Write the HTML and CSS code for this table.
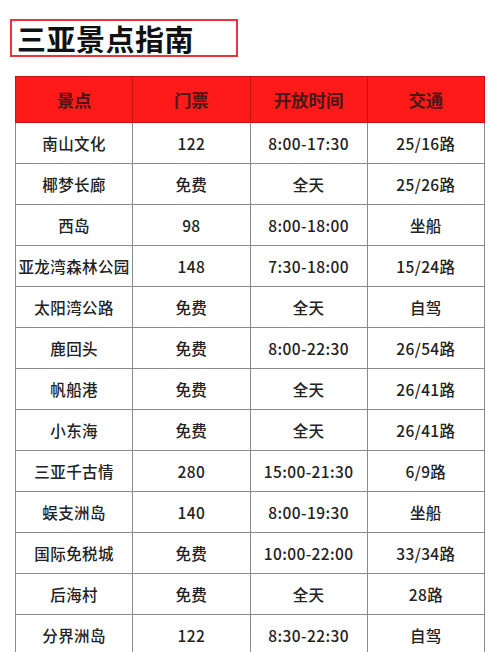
FILE: index.html
```html
<!DOCTYPE html>
<html lang="zh">
<head>
<meta charset="utf-8">
<link rel="stylesheet" href="styles.css">
</head>
<body>
<div class="page">
  <h1 class="title">三亚景点指南</h1>
  <table class="guide">
    <thead>
      <tr><th>景点</th><th>门票</th><th>开放时间</th><th>交通</th></tr>
    </thead>
    <tbody>
      <tr><td>南山文化</td><td>122</td><td>8:00-17:30</td><td>25/16路</td></tr>
      <tr><td>椰梦长廊</td><td>免费</td><td>全天</td><td>25/26路</td></tr>
      <tr><td>西岛</td><td>98</td><td>8:00-18:00</td><td>坐船</td></tr>
      <tr><td>亚龙湾森林公园</td><td>148</td><td>7:30-18:00</td><td>15/24路</td></tr>
      <tr><td>太阳湾公路</td><td>免费</td><td>全天</td><td>自驾</td></tr>
      <tr><td>鹿回头</td><td>免费</td><td>8:00-22:30</td><td>26/54路</td></tr>
      <tr><td>帆船港</td><td>免费</td><td>全天</td><td>26/41路</td></tr>
      <tr><td>小东海</td><td>免费</td><td>全天</td><td>26/41路</td></tr>
      <tr><td>三亚千古情</td><td>280</td><td>15:00-21:30</td><td>6/9路</td></tr>
      <tr><td>蜈支洲岛</td><td>140</td><td>8:00-19:30</td><td>坐船</td></tr>
      <tr><td>国际免税城</td><td>免费</td><td>10:00-22:00</td><td>33/34路</td></tr>
      <tr><td>后海村</td><td>免费</td><td>全天</td><td>28路</td></tr>
      <tr><td>分界洲岛</td><td>122</td><td>8:30-22:30</td><td>自驾</td></tr>
    </tbody>
  </table>
</div>
</body>
</html>
```
FILE: styles.css
```css
html, body {
  margin: 0;
  padding: 0;
  background: #ffffff;
}
body {
  font-family: "Noto Sans CJK SC", sans-serif;
  color: #222222;
}
.page {
  padding: 19px 0 0 15px;
  width: 470px;
}
.title {
  margin: 0 0 19px -5px;
  width: 219px;
  height: 34px;
  border: 2px solid #e8353d;
  font-size: 29px;
  line-height: 34px;
  font-weight: bold;
  color: #111111;
  padding-left: 5px;
  letter-spacing: 0.5px;
  box-sizing: content-box;
}
.guide {
  border-collapse: collapse;
  width: 470px;
  table-layout: fixed;
}
.guide th, .guide td {
  border: 1px solid #8a8a8a;
  text-align: center;
  padding: 0;
}
.guide th {
  background: #ff1a1a;
  color: #4a1818;
  font-size: 17.5px;
  font-weight: bold;
  height: 45px;
  border-color: #c81010;
}
.guide td {
  font-size: 15.5px;
  letter-spacing: 0.4px;
  height: 40px;
  color: #222222;
  font-weight: 500;
}
```
